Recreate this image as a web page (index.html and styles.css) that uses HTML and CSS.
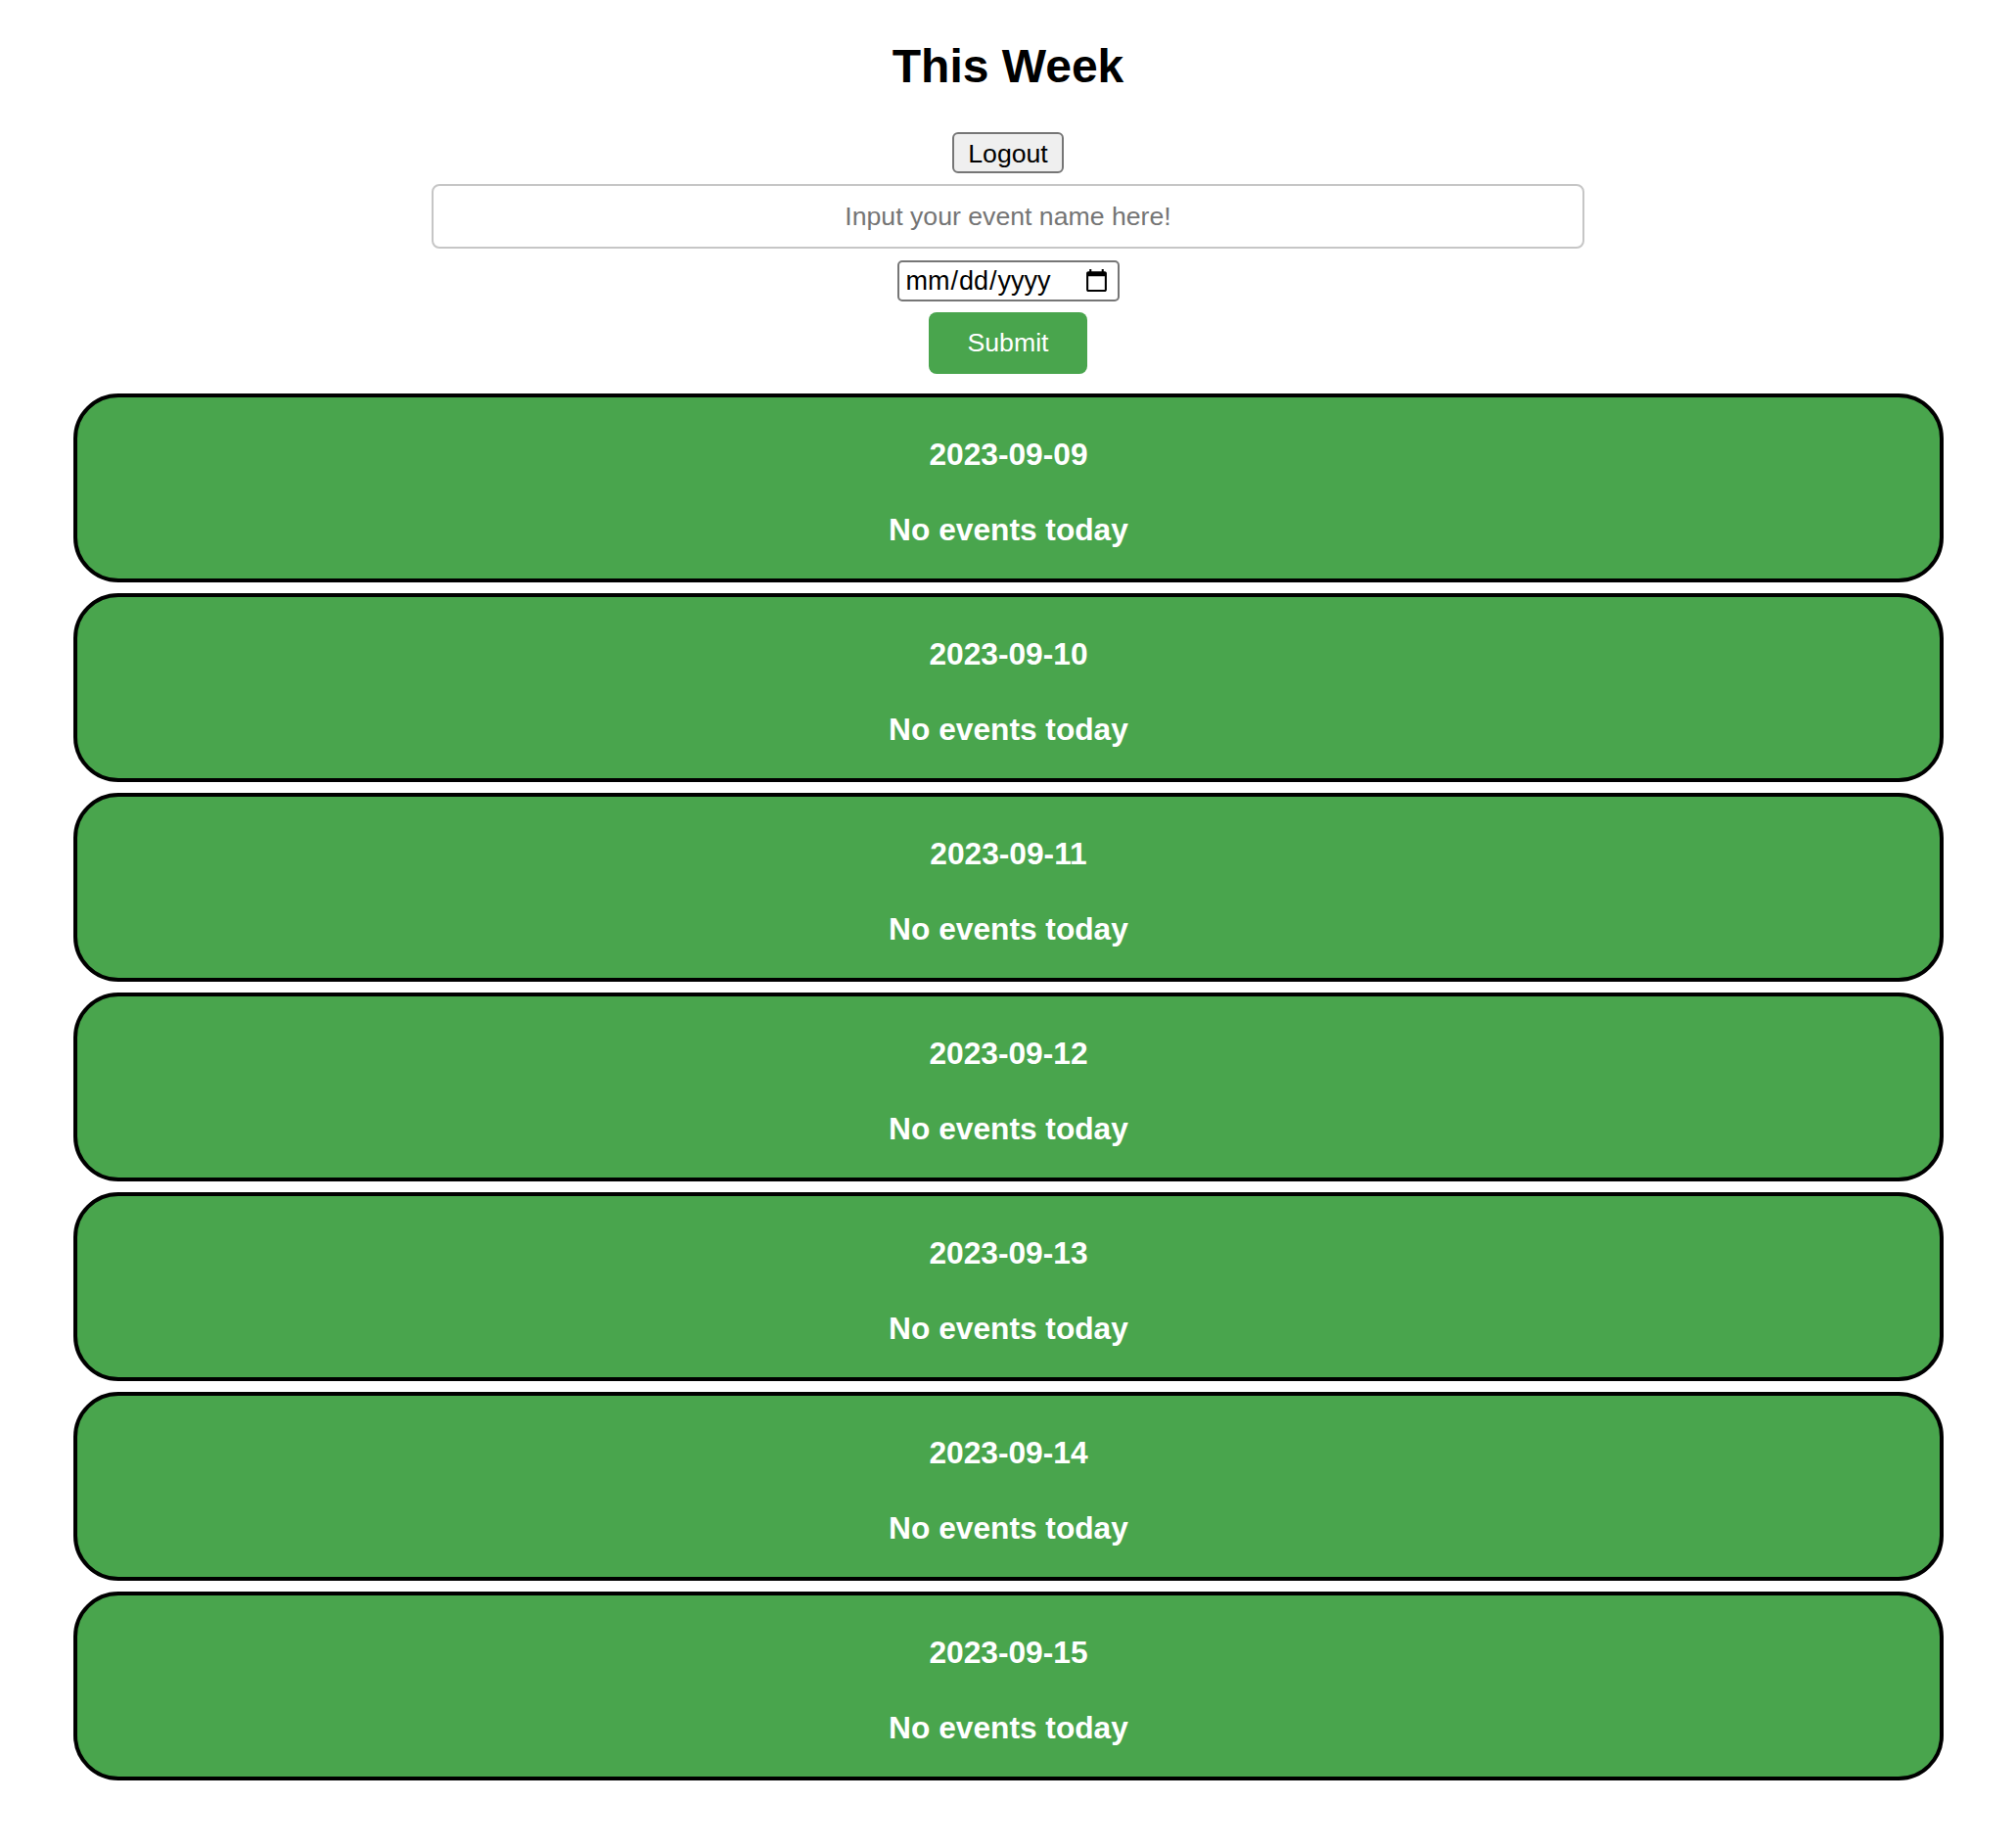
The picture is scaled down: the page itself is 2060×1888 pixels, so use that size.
FILE: index.html
```html
<!DOCTYPE html>
<html lang="en">
<head>
<meta charset="utf-8">
<title>This Week</title>
<link rel="stylesheet" href="styles.css">
</head>
<body>
  <h1 class="page-title">This Week</h1>
  <div class="controls">
    <button class="logout-btn" type="button">Logout</button>
    <input class="event-input" type="text" placeholder="Input your event name here!">
    <input class="date-input" type="date">
    <button class="submit-btn" type="button">Submit</button>
  </div>
  <div class="days">
    <div class="day-card"><h3 class="day-date">2023-09-09</h3><p class="day-events">No events today</p></div>
    <div class="day-card"><h3 class="day-date">2023-09-10</h3><p class="day-events">No events today</p></div>
    <div class="day-card"><h3 class="day-date">2023-09-11</h3><p class="day-events">No events today</p></div>
    <div class="day-card"><h3 class="day-date">2023-09-12</h3><p class="day-events">No events today</p></div>
    <div class="day-card"><h3 class="day-date">2023-09-13</h3><p class="day-events">No events today</p></div>
    <div class="day-card"><h3 class="day-date">2023-09-14</h3><p class="day-events">No events today</p></div>
    <div class="day-card"><h3 class="day-date">2023-09-15</h3><p class="day-events">No events today</p></div>
  </div>
</body>
</html>
```

FILE: styles.css
```css
html, body {
  margin: 0;
  padding: 0;
  background: #ffffff;
}

body {
  font-family: "Liberation Sans", Arial, Helvetica, sans-serif;
  color: #000;
}

.page-title {
  margin: 40px 0 0;
  font-size: 48px;
  line-height: 55px;
  font-weight: bold;
  text-align: center;
}

.controls {
  margin-top: 40px;
  display: flex;
  flex-direction: column;
  align-items: center;
  gap: 11px;
}

.logout-btn {
  box-sizing: border-box;
  height: 42px;
  padding: 0 14px;
  font-family: inherit;
  font-size: 26.67px;
  line-height: 40px;
  color: #000;
  background: #efefef;
  border: 2px solid #767676;
  border-radius: 6px;
}

.event-input {
  box-sizing: border-box;
  width: 1178px;
  height: 66px;
  padding: 0 20px;
  font-family: inherit;
  font-size: 26.67px;
  text-align: center;
  border: 2px solid #c6c6c6;
  border-radius: 8px;
  background: #fff;
  outline: none;
}

.event-input::placeholder {
  color: #757575;
}

.date-input {
  box-sizing: border-box;
  width: 227px;
  height: 42px;
  margin-top: 1px;
  padding: 0 6px;
  font-family: inherit;
  font-size: 27px;
  color: #000;
  background: #fff;
  border: 2px solid #767676;
  border-radius: 5px;
}

.submit-btn {
  box-sizing: border-box;
  width: 162px;
  height: 63px;
  padding: 0;
  font-family: inherit;
  font-size: 26.67px;
  line-height: 63px;
  color: #fff;
  background: #49a54d;
  border: none;
  border-radius: 8px;
}

.days {
  margin: 20px 74px 40px 75px;
  display: flex;
  flex-direction: column;
  gap: 11px;
}

.day-card {
  box-sizing: border-box;
  height: 193px;
  padding: 40px 0 0;
  background: #49a54d;
  border: 4px solid #000;
  border-radius: 46px;
  text-align: center;
  color: #fff;
}

.day-date,
.day-events {
  margin: 0;
  font-size: 31.7px;
  line-height: 36px;
  font-weight: bold;
}

.day-events {
  margin-top: 41px;
}
```
